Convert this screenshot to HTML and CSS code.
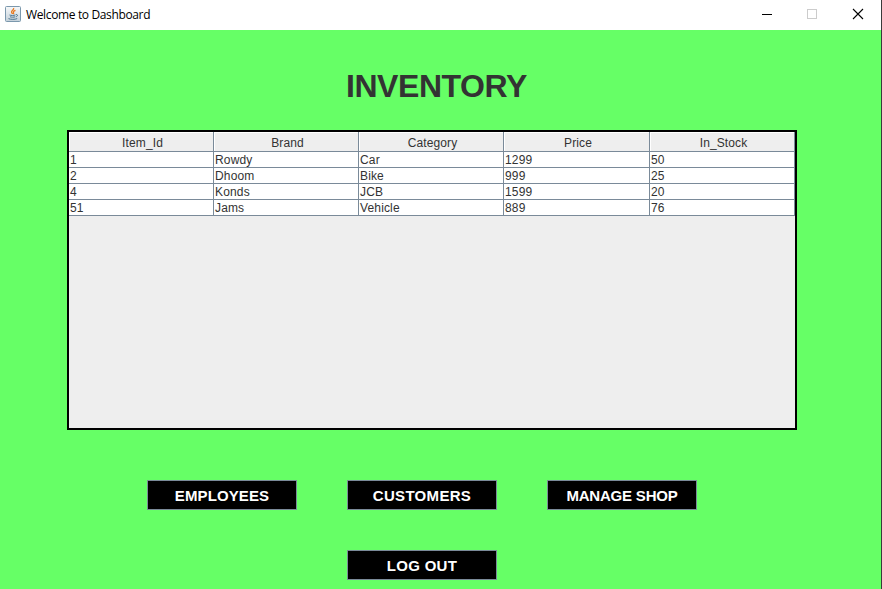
FILE: index.html
```html
<!DOCTYPE html>
<html lang="en">
<head>
<meta charset="utf-8">
<title>Welcome to Dashboard</title>
<link rel="stylesheet" href="styles.css">
</head>
<body>
<div class="window">
  <header class="titlebar">
    <svg class="app-icon" width="16" height="16" viewBox="0 0 16 16" fill="none">
      <defs><linearGradient id="tile" x1="0" y1="0" x2="0" y2="1"><stop offset="0" stop-color="#f7f9fa"/><stop offset="1" stop-color="#c3d0d9"/></linearGradient></defs>
      <rect x=".5" y=".5" width="15" height="15" rx="1" fill="url(#tile)" stroke="#7b98ad"/>
      <path d="M8.600 2c.8 2-2.700 2.600-2 4.400.2.600.8 1 .9 1.600M10.500 4.300C8.700 5 8 5.700 8.500 6.500s.2 1.100-.3 1.500" stroke="#e87b22" stroke-width="1.300"/>
      <path d="M4.500 9c1.500.6 4.300.6 5.800 0M5 10.800c1.500.5 3.800.5 5.200 0M10.800 8.600c2.400-.5 2.200 1.700.1 2.200M3.500 12.600c2 1 6.500 1 8.700 0" stroke="#4c7590"/>
    </svg>
    <span class="title">Welcome to Dashboard</span>
    <svg class="controls" width="138" height="30" viewBox="0 0 138 30" fill="none" shape-rendering="crispEdges">
      <path d="M18 14.500h10" stroke="#000"/>
      <rect x="63.500" y="9.500" width="9" height="9" stroke="#ccc"/>
      <path d="M109 9l10 10M119 9l-10 10" stroke="#000" stroke-width="1.100" shape-rendering="auto"/>
    </svg>
  </header>
  <main class="content">
    <h1>INVENTORY</h1>
    <div class="table-pane">
      <table>
        <colgroup><col class="col"><col class="col"><col class="col"><col class="col-wide"><col class="col"></colgroup>
        <thead><tr><th>Item_Id</th><th>Brand</th><th>Category</th><th>Price</th><th>In_Stock</th></tr></thead>
        <tbody>
          <tr><td>1</td><td>Rowdy</td><td>Car</td><td>1299</td><td>50</td></tr>
          <tr><td>2</td><td>Dhoom</td><td>Bike</td><td>999</td><td>25</td></tr>
          <tr><td>4</td><td>Konds</td><td>JCB</td><td>1599</td><td>20</td></tr>
          <tr><td>51</td><td>Jams</td><td>Vehicle</td><td>889</td><td>76</td></tr>
        </tbody>
      </table>
    </div>
    <nav class="actions">
      <button>EMPLOYEES</button>
      <button class="customers">CUSTOMERS</button>
      <button class="manage">MANAGE SHOP</button>
      <button class="logout">LOG OUT</button>
    </nav>
  </main>
</div>
</body>
</html>
```
FILE: styles.css
```css
* { box-sizing: border-box; }
body { margin: 0; font-family: "Liberation Sans", Arial, sans-serif; color: #333; }
.window { width: 882px; height: 589px; overflow: hidden; border-right: 1px solid #3a3a3a; background: #6f6; }
.titlebar { height: 30px; display: flex; align-items: center; padding-left: 5px; background: #fff; }
.app-icon { margin-top: -2px; }
.title { margin-left: 5px; font: 12px/30px "Open Sans", "Noto Sans", sans-serif; letter-spacing: -0.36px; color: #000; height: 30px; }
.controls { margin-left: auto; margin-right: -1px; }
.content { height: 559px; padding: 35px 0 0 67px; }
h1 { margin: 0 0 0 279px; width: 190px; height: 65px; font-size: 32px; line-height: 42px; letter-spacing: -0.45px; }
.table-pane { width: 730px; height: 300px; border: 2px solid #000; background: #eee; }
table { width: 726px; table-layout: fixed; border-collapse: separate; border-spacing: 0; font-size: 12px; }
.col { width: 145px; }
.col-wide { width: 146px; }
th, td { border-right: 1px solid #7a8a99; border-bottom: 1px solid #7a8a99; white-space: nowrap; }
th { height: 20px; padding: 2px 0 0 3px; line-height: 17px; font-weight: 400; letter-spacing: 0.12px; background: #eee; box-shadow: inset 1px 1px #fff; }
th { padding-top: 3px; line-height: 16px; }
td { height: 16px; padding: 1px 0 0 1px; line-height: 14px; background: #fff; letter-spacing: 0.15px; }
.actions { display: grid; grid-template-columns: repeat(3, 150px); gap: 40px 50px; margin: 50px 0 0 80px; }
button { height: 30px; padding: 1px 0 0; border: 1px solid #7a8a99; background: #000; color: #fff; font: bold 15px/27px "Liberation Sans", Arial, sans-serif; letter-spacing: 0.1px; }
.customers { letter-spacing: 0.3px; }
.manage { letter-spacing: -0.2px; }
.logout { grid-column: 2; letter-spacing: 0.3px; }
```
